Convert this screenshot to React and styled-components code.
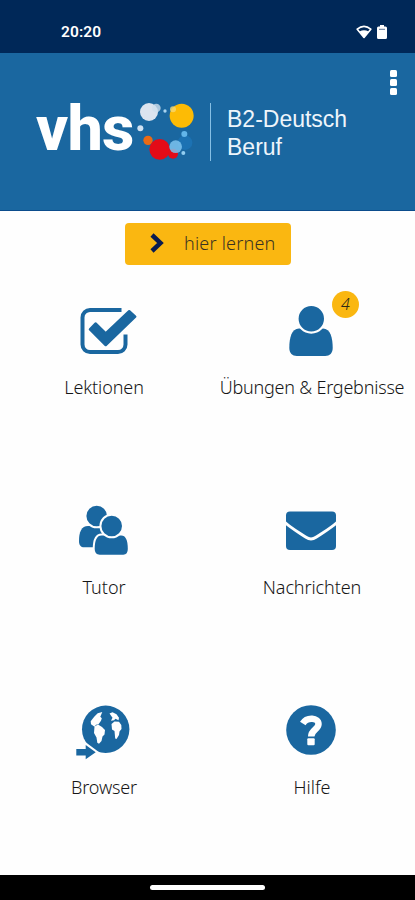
import React from "react";
import styled, { createGlobalStyle } from "styled-components";

const GlobalStyle = createGlobalStyle`
    * {
        box-sizing: border-box;
    }
    body {
        margin: 0;
        background-color: #fff;
        font-family: "Noto Sans", "Open Sans", sans-serif;
    }
`;

const Screen = styled.div`
    width: 415px;
    height: 900px;
    display: flex;
    flex-direction: column;
    background-color: #fefefe;
    overflow: hidden;
`;

const StatusBar = styled.div`
    height: 53px;
    flex-shrink: 0;
    display: flex;
    justify-content: space-between;
    align-items: center;
    padding: 11px 28px 0 61px;
    background-color: #002858;
`;

const Clock = styled.span`
    font-family: Roboto, sans-serif;
    font-size: 15.5px;
    font-weight: 600;
    line-height: 20px;
    letter-spacing: 0.1px;
    color: #fff;
`;

const StatusIcons = styled.div`
    display: flex;
    align-items: center;
    gap: 5px;
`;

const Header = styled.header`
    height: 158px;
    flex-shrink: 0;
    display: flex;
    align-items: flex-start;
    padding-left: 36px;
    background-color: #1a67a0;
    border-bottom: 1px solid #0b4c8c;
`;

const Wordmark = styled.div`
    width: 101px;
    margin-top: 39px;
    font-family: Roboto, sans-serif;
    font-size: 63px;
    font-weight: 800;
    line-height: 74px;
    letter-spacing: ${props => props.$spacing}px;
    color: #fff;
`;

const Dots = styled.svg`
    width: 70px;
    height: 70px;
    margin: 42px 0 0 -7px;
`;

const CourseTitle = styled.h1`
    height: 58px;
    margin: 50px 0 0 10px;
    padding: 2px 0 0 16px;
    border-left: 1px solid #86bfe4;
    font-family: "Liberation Sans", Arial, sans-serif;
    font-size: 23px;
    font-weight: 400;
    line-height: 28px;
    color: #eef5fb;
    white-space: nowrap;
`;

const MenuButton = styled.button`
    display: flex;
    flex-direction: column;
    gap: 2.5px;
    margin: 17px 18px 0 auto;
    padding: 0;
    border: none;
    background: none;
    cursor: pointer;
`;

const MenuDot = styled.span`
    width: 7px;
    height: 6.5px;
    border-radius: 1.5px;
    background-color: #fff;
`;

const LearnButton = styled.button`
    width: 166px;
    height: 42px;
    flex-shrink: 0;
    align-self: center;
    display: flex;
    align-items: center;
    gap: 20px;
    margin: 12px 0 0 1px;
    padding: 0 0 2px 25px;
    border: none;
    border-radius: 4px;
    background-color: #fab711;
    font-family: inherit;
    font-size: 18px;
    font-weight: 300;
    letter-spacing: ${props => props.$spacing}px;
    color: #3b3322;
    white-space: nowrap;
    cursor: pointer;
`;

const Menu = styled.main`
    flex: 1;
    min-height: 0;
    display: grid;
    grid-template-columns: 208px 206px;
    grid-auto-rows: 200px;
    padding-top: 35px;
`;

const Tile = styled.div`
    display: flex;
    flex-direction: column;
    align-items: center;
`;

const IconBox = styled.div`
    position: relative;
    width: 60px;
    height: 60px;
    svg {
        display: block;
        overflow: visible;
    }
`;

const Badge = styled.span`
    position: absolute;
    top: -9px;
    right: -18px;
    width: 27px;
    height: 27px;
    border-radius: 50%;
    background-color: #fab711;
    font-size: 16px;
    font-style: italic;
    line-height: 27px;
    font-weight: 300;
    text-align: center;
    color: #2c2818;
`;

const Label = styled.span`
    margin: 14px 0 0 ${props => props.$shift || 0}px;
    font-size: 18px;
    font-weight: 300;
    line-height: 26px;
    letter-spacing: ${props => props.$spacing || 0}px;
    color: #161616;
    white-space: nowrap;
`;

const NavBar = styled.div`
    height: 25px;
    flex-shrink: 0;
    display: flex;
    justify-content: center;
    padding-top: 10px;
    background-color: #000;
`;

const HomeHandle = styled.div`
    width: 115px;
    height: 5px;
    border-radius: 3px;
    background-color: #fff;
`;

const blue = "#1a67a0";

const Icon = ({ children }) => (
    <svg width="60" height="60" viewBox="0 0 60 60" fill={blue}>{children}</svg>
)

const CheckIcon = () => (
    <Icon>
        <path d="M47.500 10H16a7.500 7.500 0 0 0-7.500 7.500v27a7.500 7.500 0 0 0 7.500 7.500h28a7.500 7.500 0 0 0 7.500-7.500V34.500" fill="none" stroke={blue} strokeWidth="4" />
        <path d="M16 29.300L21.500 23.500l10.200 9.800L55.200 11.200l6 5.400L31.700 45z" stroke={blue} strokeWidth="2.500" strokeLinejoin="round" />
    </Icon>
)

const UserIcon = () => (
    <Icon>
        <path d="M18 28.500C10.500 28.500 8.300 38 8.300 48c0 5 3 8 7.500 8h28.400c4.500 0 7.500-3 7.500-8 0-10-2.200-19.500-9.700-19.500z" />
        <circle cx="30.300" cy="18.800" r="13.800" stroke="#fefefe" strokeWidth="2.200" />
    </Icon>
)

const UsersIcon = () => (
    <Icon>
        <path d="M14 26c-6.500 0-9 6-9 15 0 4.500 2 6.300 5 6.300h20V26z" />
        <circle cx="22.700" cy="16" r="11.300" stroke="#fefefe" strokeWidth="2" />
        <path d="M27.500 34.500c-6 0-7.800 7-7.800 14.500 0 4.500 2.500 6.700 6 6.700h23.600c3.500 0 5.500-2.200 5.500-6.700 0-7.500-1.800-14.500-7.500-14.500z" stroke="#fefefe" strokeWidth="2" />
        <circle cx="37.700" cy="26" r="11.300" stroke="#fefefe" strokeWidth="2" />
    </Icon>
)

const MailIcon = () => (
    <Icon>
        <rect x="5" y="11.500" width="50" height="38.500" rx="4" />
        <path d="M4 22.500C10 28 17 32 25 37.300c3.500 2.400 6.500 2.400 10 0C43 32 50 28 56 22.500" fill="none" stroke="#fefefe" strokeWidth="3" />
    </Icon>
)

const GlobeIcon = () => (
    <Icon>
        <circle cx="31.700" cy="29.300" r="23.700" />
        <g fill="#fefefe">
            <path d="M28.300 12l-4.600 1.200-3.500 3.500-3.500 4.500 0.300 3 3.500 2.500 1.500-2 2.500-0.500 2.500-3.500 0.800-2.500-1.500-1.500z" />
            <path d="M20.500 26.500l3.500-2 4 2.500 3 3-0.500 4.500-2 2-1 4.500-2.500 2.800-1.700-1-0.800-5.300-2.500-4.500z" />
            <path d="M35.500 13.500l3-1.200 4 2 2.500 3.500-0.500 2.500-3-1.500-1.500 1.500-3 0.500 1.500-3z" />
            <path d="M37.500 24l3-2.500 4.500 0.200 2.300 3.300 0.200 4-2 2.500-0.500 3.500-2.500 4-1.300-0.500-0.700-7.500-2.500-1.500z" />
        </g>
        <path d="M2.700 49.300H12V45l9.700 7.300L12 59v-3.700H2.700z" stroke="#fefefe" strokeWidth="4" />
        <path d="M2.300 49H11.700V45l10 7.200L11.700 59.200v-3.800H2.300z" />
    </Icon>
)

const HelpIcon = () => (
    <Icon>
        <circle cx="30" cy="30" r="24.800" />
        <path d="M21.800 23.500C26 16.500 37.500 17.500 37.500 24c0 5.500-7.300 5.500-7.300 12.500" fill="none" stroke="#fefefe" strokeWidth="6.500" />
        <rect x="26.300" y="38.300" width="7.400" height="7" rx="1" fill="#fefefe" />
    </Icon>
)

const tiles = [
    { label: "Lektionen", icon: <CheckIcon />, spacing: -0.1 },
    { label: "Übungen & Ergebnisse", icon: <UserIcon />, badge: 4, shift: 2, spacing: -0.22 },
    { label: "Tutor", icon: <UsersIcon /> },
    { label: "Nachrichten", icon: <MailIcon />, shift: 2, spacing: -0.1 },
    { label: "Browser", icon: <GlobeIcon />, spacing: -0.15 },
    { label: "Hilfe", icon: <HelpIcon />, shift: 2 },
];

const App = () => {
    return (
        <Screen>
            <GlobalStyle />
            <StatusBar>
                <Clock>20:20</Clock>
                <StatusIcons>
                    <svg width="16" height="14" viewBox="0 0 16 14">
                        <path d="M1.200 4.200Q8-1.500 14.800 4.200L8 12.500z" fill="none" stroke="#fff" strokeWidth="1.600" strokeLinejoin="round" />
                        <path d="M3.500 6.500Q8 4 12.500 6.500L8 12.500z" fill="#fff" />
                    </svg>
                    <svg width="10" height="14" viewBox="0 0 10 14">
                        <path d="M3 0h4v1.500H3zM1.500 1.500h7q1.500 0 1.500 1.500v9.500q0 1.500-1.500 1.500h-7Q0 14 0 12.500V3q0-1.500 1.500-1.500z" fill="#fff" />
                        <path d="M2 4.300h6" stroke="#5a7396" />
                    </svg>
                </StatusIcons>
            </StatusBar>

            <Header>
                <Wordmark $spacing={-0.8}>vhs</Wordmark>
                <Dots viewBox="0 0 210 210">
                    <circle cx="57" cy="51" r="27" fill="#dce4ef" />
                    <circle cx="79" cy="39" r="13" fill="#cfe0ee" fillOpacity="0.8" />
                    <circle cx="105" cy="48" r="5" fill="#a9d4f0" />
                    <circle cx="155" cy="62" r="36" fill="#fdbb05" />
                    <circle cx="129" cy="43" r="9" fill="#f6d870" fillOpacity="0.8" />
                    <circle cx="31" cy="100" r="9" fill="#cfe2f3" />
                    <circle cx="54" cy="136" r="14" fill="#ea6a15" />
                    <circle cx="165" cy="143" r="22" fill="#1c72b3" />
                    <circle cx="89" cy="163" r="31" fill="#e30b17" />
                    <circle cx="129" cy="176" r="15" fill="#e30b17" />
                    <circle cx="137" cy="155" r="19" fill="#7cc3ee" fillOpacity="0.85" />
                    <circle cx="163" cy="117" r="9" fill="#62b5ea" />
                    <circle cx="160" cy="174" r="6" fill="#92cdf0" />
                </Dots>
                <CourseTitle>B2-Deutsch<br />Beruf</CourseTitle>
                <MenuButton aria-label="Menü">
                    <MenuDot />
                    <MenuDot />
                    <MenuDot />
                </MenuButton>
            </Header>

            <LearnButton $spacing={0.2}>
                <svg width="14" height="20" viewBox="0 0 14 20">
                    <path d="M2 2l8.500 8L2 18" fill="none" stroke="#0a1c50" strokeWidth="4.500" />
                </svg>
                hier lernen
            </LearnButton>

            <Menu>
                {tiles.map(tile => (
                    <Tile key={tile.label}>
                        <IconBox>
                            {tile.icon}
                            {tile.badge && <Badge>{tile.badge}</Badge>}
                        </IconBox>
                        <Label $shift={tile.shift} $spacing={tile.spacing}>{tile.label}</Label>
                    </Tile>
                ))}
            </Menu>

            <NavBar>
                <HomeHandle />
            </NavBar>
        </Screen>
    )
}

export default App;
